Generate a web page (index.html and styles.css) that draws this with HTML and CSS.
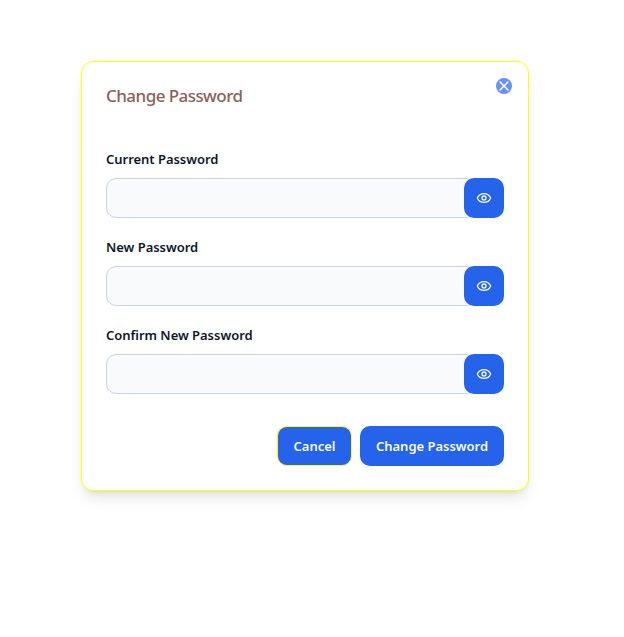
FILE: index.html
```html
<!DOCTYPE html>
<html lang="en">
<head>
<meta charset="utf-8">
<title>Change Password</title>
<link rel="stylesheet" href="styles.css">
</head>
<body>
<svg width="0" height="0" class="defs">
  <symbol id="eye" viewBox="0 0 24 24">
    <path d="M2.2 12.35a1 1 0 0 1 0-.7 10.75 10.75 0 0 1 19.6 0 1 1 0 0 1 0 .7 10.75 10.75 0 0 1-19.6 0"/>
    <circle cx="12" cy="12" r="3"/>
  </symbol>
</svg>
<form class="dialog" role="dialog" aria-labelledby="title">
  <h2 class="title" id="title">Change Password</h2>
  <div class="fields">
    <div class="field">
      <label class="label" for="current">Current Password</label>
      <div class="control"><input class="input" id="current" type="password"><button class="reveal" type="button" aria-label="Show password"><svg class="eye"><use href="#eye"/></svg></button></div>
    </div>
    <div class="field">
      <label class="label" for="new">New Password</label>
      <div class="control"><input class="input" id="new" type="password"><button class="reveal" type="button" aria-label="Show password"><svg class="eye"><use href="#eye"/></svg></button></div>
    </div>
    <div class="field">
      <label class="label" for="confirm">Confirm New Password</label>
      <div class="control"><input class="input" id="confirm" type="password"><button class="reveal" type="button" aria-label="Show password"><svg class="eye"><use href="#eye"/></svg></button></div>
    </div>
  </div>
  <div class="actions">
    <button class="button cancel" type="button">Cancel</button>
    <button class="button submit" type="button">Change Password</button>
  </div>
  <button class="close" type="button" aria-label="Close"><svg class="cross" viewBox="0 0 16 16"><path d="M4 4l8 8M12 4l-8 8"/></svg></button>
</form>
</body>
</html>
```
FILE: styles.css
```css
* { box-sizing: border-box; }
body {
  margin: 0;
  min-height: 637px;
  background: #fff;
  color: #0f172a;
  font-family: "Segoe UI", "Noto Sans", "Open Sans", sans-serif;
}
.defs { display: block; }
.dialog {
  position: relative;
  width: 448px;
  height: 430px;
  margin: 61px 0 0 81px;
  padding: 24px;
  border: 1px solid #ff0;
  border-radius: 12px;
  background: #fff;
  box-shadow: 0 10px 15px -3px rgba(0, 0, 0, .1), 0 4px 6px -4px rgba(0, 0, 0, .1);
}
.title {
  margin: 0;
  height: 20px;
  color: #8b6257;
  font-size: 17px;
  font-weight: 550;
  line-height: 19px;
  letter-spacing: -.55px;
  white-space: nowrap;
}
.fields { display: grid; gap: 16px; margin-top: 40px; }
.field { display: grid; gap: 8px; }
.label { height: 24px; font-size: 13px; line-height: 26px; font-weight: 600; letter-spacing: -.03px; }
.control { display: flex; height: 40px; }
.input {
  flex: 1;
  min-width: 0;
  margin-right: -12px;
  border: 1px solid #cbd5e1;
  border-radius: 10px;
  background: #f8fafc;
}
.reveal, .button {
  border: 0;
  border-radius: 10px;
  background: #2563eb;
  color: #f8fafc;
}
.reveal { position: relative; display: grid; place-items: center; width: 40px; padding: 0; }
.eye, .cross { fill: none; stroke: currentColor; stroke-linecap: round; stroke-linejoin: round; }
.eye { width: 16px; height: 16px; stroke-width: 2; }
.actions { display: flex; justify-content: flex-end; gap: 8px; margin-top: 32px; }
.button { height: 40px; padding: 0; font: 600 13px/20px "Segoe UI", "Noto Sans", "Open Sans", sans-serif; letter-spacing: -.02px; white-space: nowrap; }
.cancel { width: 75px; border: 1px solid #ff0; }
.submit { width: 144px; }
.close {
  position: absolute;
  top: 16px;
  right: 16px;
  width: 16px;
  height: 16px;
  padding: 0;
  border: 0;
  border-radius: 50%;
  background: #6692f1;
  color: #fff;
}
.cross { display: block; width: 16px; height: 16px; stroke-width: 1.5; }
```
